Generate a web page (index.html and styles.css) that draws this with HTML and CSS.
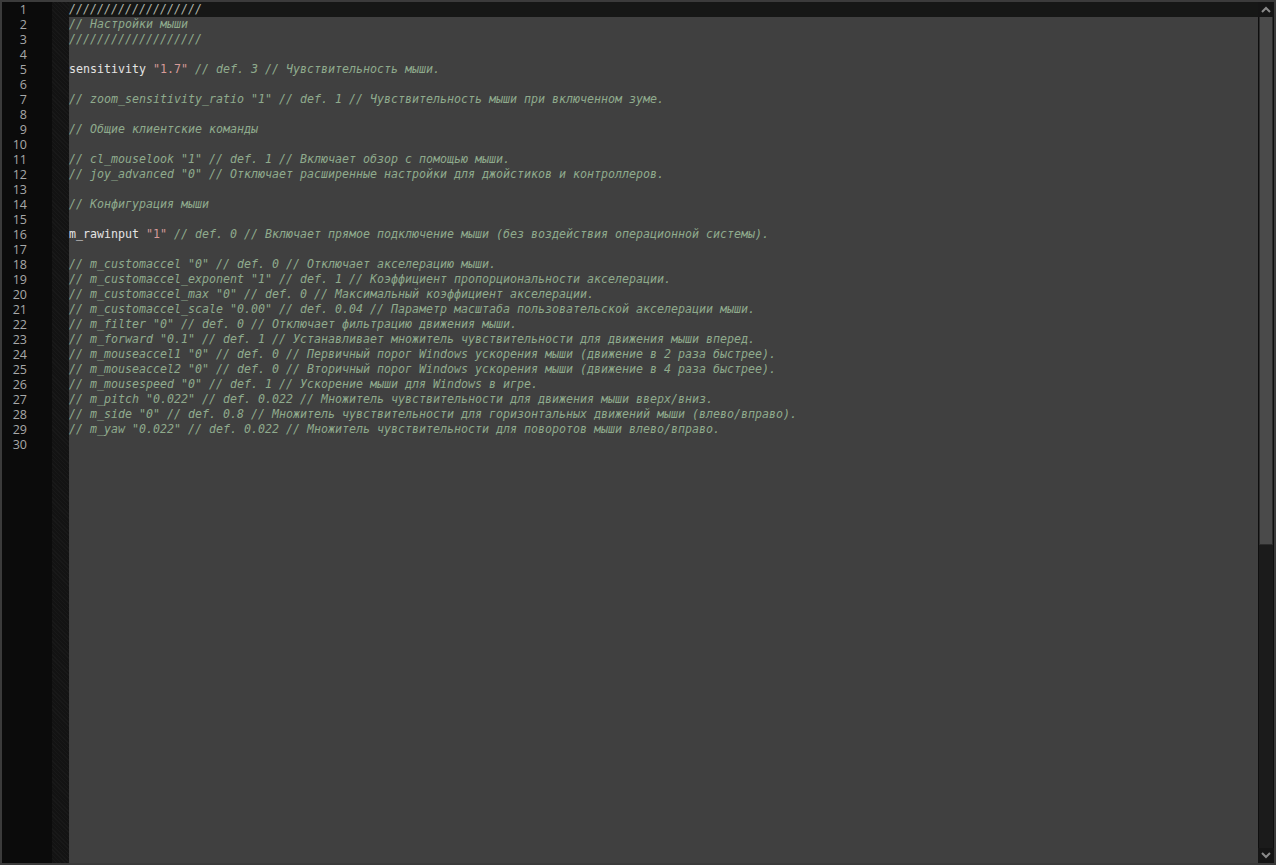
FILE: index.html
```html
<!DOCTYPE html>
<html>
<head>
<meta charset="utf-8">
<link rel="stylesheet" href="styles.css">
</head>
<body>
<div class="frame">
  <div class="gutter">
    <div class="ln">1</div><div class="ln">2</div><div class="ln">3</div><div class="ln">4</div><div class="ln">5</div>
    <div class="ln">6</div><div class="ln">7</div><div class="ln">8</div><div class="ln">9</div><div class="ln">10</div>
    <div class="ln">11</div><div class="ln">12</div><div class="ln">13</div><div class="ln">14</div><div class="ln">15</div>
    <div class="ln">16</div><div class="ln">17</div><div class="ln">18</div><div class="ln">19</div><div class="ln">20</div>
    <div class="ln">21</div><div class="ln">22</div><div class="ln">23</div><div class="ln">24</div><div class="ln">25</div>
    <div class="ln">26</div><div class="ln">27</div><div class="ln">28</div><div class="ln">29</div><div class="ln">30</div>
  </div>
  <div class="fold"></div>
  <div class="code">
    <div class="line current"><span class="c">///////////////////</span></div>
    <div class="line"><span class="c">// Настройки мыши</span></div>
    <div class="line"><span class="c">///////////////////</span></div>
    <div class="line"></div>
    <div class="line"><span class="t">sensitivity </span><span class="s">"1.7"</span><span class="c"> // def. 3 // Чувствительность мыши.</span></div>
    <div class="line"></div>
    <div class="line"><span class="c">// zoom_sensitivity_ratio "1" // def. 1 // Чувствительность мыши при включенном зуме.</span></div>
    <div class="line"></div>
    <div class="line"><span class="c">// Общие клиентские команды</span></div>
    <div class="line"></div>
    <div class="line"><span class="c">// cl_mouselook "1" // def. 1 // Включает обзор с помощью мыши.</span></div>
    <div class="line"><span class="c">// joy_advanced "0" // Отключает расширенные настройки для джойстиков и контроллеров.</span></div>
    <div class="line"></div>
    <div class="line"><span class="c">// Конфигурация мыши</span></div>
    <div class="line"></div>
    <div class="line"><span class="t">m_rawinput </span><span class="s">"1"</span><span class="c"> // def. 0 // Включает прямое подключение мыши (без воздействия операционной системы).</span></div>
    <div class="line"></div>
    <div class="line"><span class="c">// m_customaccel "0" // def. 0 // Отключает акселерацию мыши.</span></div>
    <div class="line"><span class="c">// m_customaccel_exponent "1" // def. 1 // Коэффициент пропорциональности акселерации.</span></div>
    <div class="line"><span class="c">// m_customaccel_max "0" // def. 0 // Максимальный коэффициент акселерации.</span></div>
    <div class="line"><span class="c">// m_customaccel_scale "0.00" // def. 0.04 // Параметр масштаба пользовательской акселерации мыши.</span></div>
    <div class="line"><span class="c">// m_filter "0" // def. 0 // Отключает фильтрацию движения мыши.</span></div>
    <div class="line"><span class="c">// m_forward "0.1" // def. 1 // Устанавливает множитель чувствительности для движения мыши вперед.</span></div>
    <div class="line"><span class="c">// m_mouseaccel1 "0" // def. 0 // Первичный порог Windows ускорения мыши (движение в 2 раза быстрее).</span></div>
    <div class="line"><span class="c">// m_mouseaccel2 "0" // def. 0 // Вторичный порог Windows ускорения мыши (движение в 4 раза быстрее).</span></div>
    <div class="line"><span class="c">// m_mousespeed "0" // def. 1 // Ускорение мыши для Windows в игре.</span></div>
    <div class="line"><span class="c">// m_pitch "0.022" // def. 0.022 // Множитель чувствительности для движения мыши вверх/вниз.</span></div>
    <div class="line"><span class="c">// m_side "0" // def. 0.8 // Множитель чувствительности для горизонтальных движений мыши (влево/вправо).</span></div>
    <div class="line"><span class="c">// m_yaw "0.022" // def. 0.022 // Множитель чувствительности для поворотов мыши влево/вправо.</span></div>
    <div class="line"></div>
  </div>
  <div class="scrollbar">
    <div class="arrow">
      <svg width="10" height="7" viewBox="0 0 10 7"><path d="M1 6 L5 2 L9 6" fill="none" stroke="#8a8a8a" stroke-width="2"/></svg>
    </div>
    <div class="track">
      <div class="thumb"></div>
    </div>
    <div class="arrow">
      <svg width="10" height="7" viewBox="0 0 10 7"><path d="M1 1 L5 5 L9 1" fill="none" stroke="#8a8a8a" stroke-width="2"/></svg>
    </div>
  </div>
</div>
</body>
</html>
```
FILE: styles.css
```css
html, body {
  margin: 0;
  padding: 0;
  background: #3b3b3b;
}
.frame {
  box-sizing: border-box;
  width: 1276px;
  height: 865px;
  border: 2px solid #3b3b3b;
  display: flex;
  font-family: "DejaVu Sans Mono", "Liberation Mono", monospace;
  font-size: 11.63px;
  line-height: 15px;
  overflow: hidden;
}
.gutter {
  width: 50px;
  flex: none;
  background: #0b0b0b;
  color: #a8a8a8;
  text-align: right;
  box-sizing: border-box;
  padding-right: 25px;
  font-family: "Open Sans", "DejaVu Sans", sans-serif;
  font-size: 12.5px;
}
.ln {
  height: 15px;
}
.fold {
  width: 17px;
  flex: none;
  background-color: #131313;
  background-image: repeating-linear-gradient(45deg, rgba(255,255,255,0.025) 0 1px, transparent 1px 3px);
}
.code {
  flex: 1;
  background: #404040;
  min-width: 0;
}
.line {
  height: 15px;
  white-space: pre;
}
.line.current {
  background: #161716;
}
.c {
  color: #8fab8d;
  font-style: italic;
}
.line.current .c {
  color: #b0b6ad;
}
.t {
  color: #e4e4e4;
}
.s {
  color: #d69a98;
}
.scrollbar {
  width: 16px;
  flex: none;
  background: #171717;
  display: flex;
  flex-direction: column;
}
.arrow {
  height: 15px;
  flex: none;
  display: flex;
  align-items: center;
  justify-content: center;
  background: #151515;
}
.track {
  flex: 1;
  background: #1b1b1b;
  border-left: 1px solid #0e0e0e;
  border-right: 1px solid #0e0e0e;
}
.thumb {
  height: 528px;
  background: #4a4a4a;
  border-left: 1px solid #2c2c2c;
  border-right: 1px solid #2c2c2c;
  border-bottom: 1px solid #2c2c2c;
  box-sizing: border-box;
}
```
